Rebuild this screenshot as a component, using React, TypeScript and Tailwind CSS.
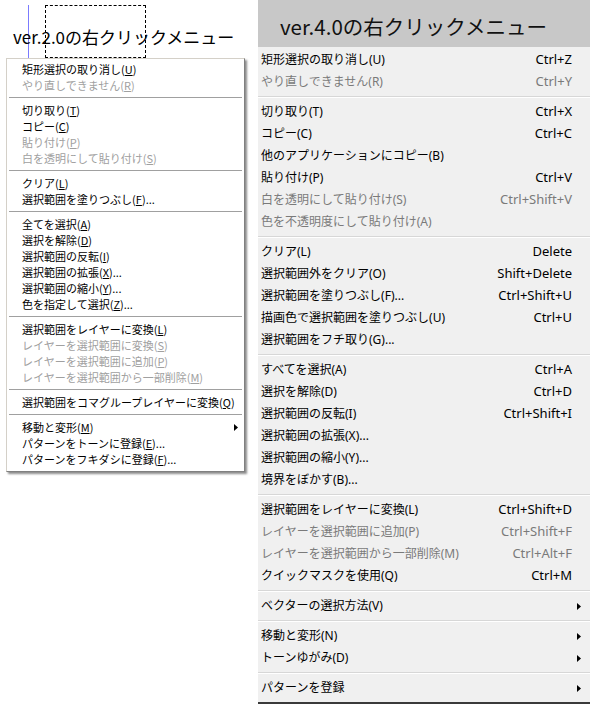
import React from 'react';

type Item = { label: string; shortcut?: string; disabled?: boolean; sub?: boolean } | 'sep';

const oldMenu: Item[] = [
  { label: '矩形選択の取り消し(U)' },
  { label: 'やり直しできません(R)', disabled: true },
  'sep',
  { label: '切り取り(T)' },
  { label: 'コピー(C)' },
  { label: '貼り付け(P)', disabled: true },
  { label: '白を透明にして貼り付け(S)', disabled: true },
  'sep',
  { label: 'クリア(L)' },
  { label: '選択範囲を塗りつぶし(F)...' },
  'sep',
  { label: '全てを選択(A)' },
  { label: '選択を解除(D)' },
  { label: '選択範囲の反転(I)' },
  { label: '選択範囲の拡張(X)...' },
  { label: '選択範囲の縮小(Y)...' },
  { label: '色を指定して選択(Z)...' },
  'sep',
  { label: '選択範囲をレイヤーに変換(L)' },
  { label: 'レイヤーを選択範囲に変換(S)', disabled: true },
  { label: 'レイヤーを選択範囲に追加(P)', disabled: true },
  { label: 'レイヤーを選択範囲から一部削除(M)', disabled: true },
  'sep',
  { label: '選択範囲をコマグループレイヤーに変換(Q)' },
  'sep',
  { label: '移動と変形(M)', sub: true },
  { label: 'パターンをトーンに登録(E)...' },
  { label: 'パターンをフキダシに登録(F)...' },
];

const newMenu: Item[] = [
  { label: '矩形選択の取り消し(U)', shortcut: 'Ctrl+Z' },
  { label: 'やり直しできません(R)', shortcut: 'Ctrl+Y', disabled: true },
  'sep',
  { label: '切り取り(T)', shortcut: 'Ctrl+X' },
  { label: 'コピー(C)', shortcut: 'Ctrl+C' },
  { label: '他のアプリケーションにコピー(B)' },
  { label: '貼り付け(P)', shortcut: 'Ctrl+V' },
  { label: '白を透明にして貼り付け(S)', shortcut: 'Ctrl+Shift+V', disabled: true },
  { label: '色を不透明度にして貼り付け(A)', disabled: true },
  'sep',
  { label: 'クリア(L)', shortcut: 'Delete' },
  { label: '選択範囲外をクリア(O)', shortcut: 'Shift+Delete' },
  { label: '選択範囲を塗りつぶし(F)...', shortcut: 'Ctrl+Shift+U' },
  { label: '描画色で選択範囲を塗りつぶし(U)', shortcut: 'Ctrl+U' },
  { label: '選択範囲をフチ取り(G)...' },
  'sep',
  { label: 'すべてを選択(A)', shortcut: 'Ctrl+A' },
  { label: '選択を解除(D)', shortcut: 'Ctrl+D' },
  { label: '選択範囲の反転(I)', shortcut: 'Ctrl+Shift+I' },
  { label: '選択範囲の拡張(X)...' },
  { label: '選択範囲の縮小(Y)...' },
  { label: '境界をぼかす(B)...' },
  'sep',
  { label: '選択範囲をレイヤーに変換(L)', shortcut: 'Ctrl+Shift+D' },
  { label: 'レイヤーを選択範囲に追加(P)', shortcut: 'Ctrl+Shift+F', disabled: true },
  { label: 'レイヤーを選択範囲から一部削除(M)', shortcut: 'Ctrl+Alt+F', disabled: true },
  { label: 'クイックマスクを使用(Q)', shortcut: 'Ctrl+M' },
  'sep',
  { label: 'ベクターの選択方法(V)', sub: true },
  'sep',
  { label: '移動と変形(N)', sub: true },
  { label: 'トーンゆがみ(D)', sub: true },
  'sep',
  { label: 'パターンを登録', sub: true },
];

const cjk = 'font-["Noto_Sans_CJK_JP","Noto_Sans",sans-serif]';
const latinFirst = 'font-["Noto_Sans","Noto_Sans_CJK_JP",sans-serif]';

// old-style menus underline the access key inside the brackets
const Mnemonic: React.FC<{ text: string }> = ({ text }) => {
  const m = text.match(/^(.*)\((.)\)(.*)$/);
  if (!m) return <>{text}</>;
  return (
    <>
      {m[1]}(<span className="underline underline-offset-1">{m[2]}</span>){m[3]}
    </>
  );
};

const Arrow: React.FC = () => (
  <svg width="4" height="7" viewBox="0 0 4 7" className="block">
    <path d="M0 0 L4 3.5 L0 7 Z" fill="#000" />
  </svg>
);

const OldMenu: React.FC = () => (
  <div className="ml-[6px] w-[239px] bg-white border-t border-l border-t-[#d4d0c8] border-l-[#d4d0c8] border-r border-b border-r-[#808080] border-b-[#808080] shadow-[2px_2px_2px_rgba(0,0,0,0.45)] pt-[2px] pb-[4px]">
    {oldMenu.map((it, i) =>
      it === 'sep' ? (
        <div key={i} className="h-[9px] flex flex-col justify-center px-[2px]">
          <div className="h-px bg-[#a0a0a0]" />
          <div className="h-px bg-white" />
        </div>
      ) : (
        <div
          key={i}
          className={`h-[16px] flex items-center pl-[15px] text-[11px] leading-[16px] ${
            it.disabled ? 'text-[#a0a0a0]' : 'text-black'
          }`}
        >
          <span className="flex-1 whitespace-nowrap">
            <Mnemonic text={it.label} />
          </span>
          <span className="w-[10px]">{it.sub && <Arrow />}</span>
        </div>
      )
    )}
  </div>
);

const NewMenu: React.FC = () => (
  <div className={`flex-1 bg-[#f0f0f0] pt-[2px] pb-[3px] border-b-2 border-b-[#3a3a3a] ${latinFirst}`}>
    {newMenu.map((it, i) =>
      it === 'sep' ? (
        <div key={i} className="h-[8px] flex flex-col justify-center">
          <div className="h-px bg-[#d7d7d7]" />
          <div className="h-px bg-white" />
        </div>
      ) : (
        <div
          key={i}
          className={`h-[22px] flex items-center pl-[3px] text-[12px] ${
            it.disabled ? 'text-[#7a7a7a]' : 'text-black'
          }`}
        >
          <span className="flex-1 whitespace-nowrap">{it.label}</span>
          {it.shortcut && <span className="whitespace-nowrap text-[13px]">{it.shortcut}</span>}
          <span className="w-[18px] pl-[5px]">{it.sub && <Arrow />}</span>
        </div>
      )
    )}
  </div>
);

export default function App() {
  return (
    <div className={`w-[592px] h-[704px] bg-white flex overflow-hidden ${cjk}`}>
      <div className="w-[258px] flex flex-col">
        <div className="relative h-[58px]">
          <div className="absolute left-[28px] top-[5px] w-px h-[53px] bg-[#7b7bff]" />
          <div className="absolute left-[45px] top-[5px] w-[101px] h-[53px] border border-dashed border-black" />
          <div className="relative pl-[13px] pt-[25px] text-[17px] leading-[24px] text-black whitespace-nowrap">
            ver.2.0の右クリックメニュー
          </div>
        </div>
        <OldMenu />
      </div>
      <div className="w-[332px] flex flex-col">
        <div className="h-[48px] bg-[#c8c8c8] flex items-center pl-[22px] pt-[5px] text-[20.5px] text-[#111] whitespace-nowrap">
          ver.4.0の右クリックメニュー
        </div>
        <NewMenu />
      </div>
    </div>
  );
}
